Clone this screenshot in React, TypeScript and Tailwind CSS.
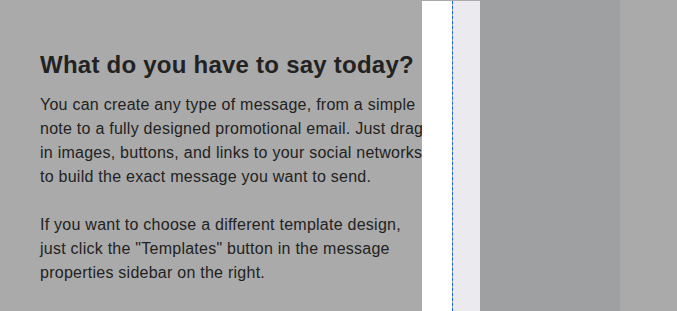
export default function App() {
  return (
    <div className="flex h-[311px] w-[677px] overflow-hidden bg-[#aaaaaa]" style={{ fontFamily: '"Liberation Sans", Arial, sans-serif' }}>
      <div className="w-[422px] shrink-0 pl-[40px] pt-[51px] text-[#222222]">
        <h1 className="text-[24px] font-bold leading-[28px] tracking-[0.24px] whitespace-nowrap">What do you have to say today?</h1>
        <div className="mt-[14px] text-[16px] leading-[24px] tracking-[0.25px] whitespace-nowrap">
          <p>You can create any type of message, from a simple<br />note to a fully designed promotional email. Just drag<br />in images, buttons, and links to your social networks<br />to build the exact message you want to send.</p>
          <p className="mt-[24px]">If you want to choose a different template design,<br />just click the "Templates" button in the message<br />properties sidebar on the right.</p>
        </div>
      </div>
      <div className="mt-[1px] flex w-[58px] shrink-0">
        <div className="w-[30px] bg-white" />
        <div className="w-px border-l border-dashed border-[#1a66ff]" />
        <div className="flex-1 bg-[#ebebef]" />
      </div>
      <div className="w-[140px] shrink-0 bg-[#9fa0a2]" />
      <div className="flex-1" />
    </div>
  );
}
